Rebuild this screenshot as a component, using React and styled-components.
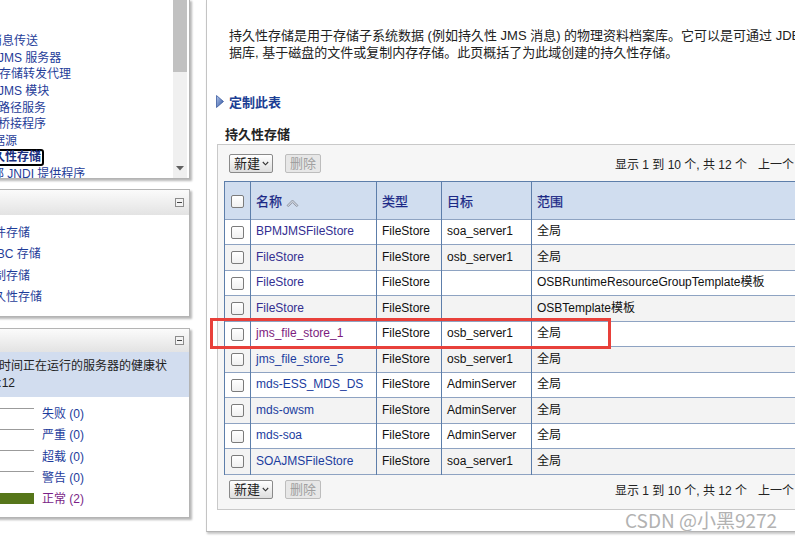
import React from "react";
import styled, { createGlobalStyle } from "styled-components";

const GlobalStyle = createGlobalStyle`
  html, body { margin: 0; padding: 0; background: #fff; }
  body {
    font-family: "Liberation Sans", "Noto Sans CJK SC", sans-serif;
    font-size: 12px;
    color: #222;
    overflow: hidden;
  }
`;

const Page = styled.div`
  position: relative;
  display: flex;
  width: 795px;
  height: 540px;
  overflow: hidden;
  background: #fff;
`;

/* ---------- left column ---------- */
const LeftColumn = styled.div`
  flex: none;
  width: 194px;
  display: flex;
  flex-direction: column;
  overflow: hidden;
`;

const Panel = styled.section`
  flex: none;
  box-sizing: border-box;
  width: 250px;
  height: ${(p) => p.$h}px;
  margin-left: -60px;
  margin-top: ${(p) => p.$gap}px;
  background: #fff;
  border: 1px solid #b4b4b4;
  box-shadow: 2px 2px 2px rgba(0, 0, 0, 0.28);
  display: flex;
  flex-direction: ${(p) => (p.$row ? "row" : "column")};
`;

const TreeList = styled.div`
  flex: 1;
  padding-top: 33px;
  overflow: hidden;
`;

const TreeItem = styled.div`
  height: 16.6px;
  display: flex;
  align-items: center;
  padding-left: ${(p) => p.$x + 59}px;
  white-space: nowrap;
  font-size: 12px;
  line-height: 14px;
  color: #1f3d99;
`;

const Selected = styled.span`
  display: inline-block;
  margin-left: -3px;
  padding: 0 1px;
  border: 2px solid #000;
  border-radius: 3px;
  line-height: 13px;
  font-weight: bold;
  color: #1a2f80;
`;

const Scrollbar = styled.div`
  flex: none;
  width: 14px;
  margin-right: 2px;
  background: #f0f0f0;
  display: flex;
  flex-direction: column;
  justify-content: space-between;
  align-items: center;
`;

const Thumb = styled.div`
  width: 14px;
  height: 72px;
  background: #c1c1c1;
`;

const ArrowDown = styled.svg`
  margin-bottom: 7px;
`;

const PanelHeader = styled.div`
  flex: none;
  height: ${(p) => p.$h}px;
  background: linear-gradient(#fbfbfb, #e3e3e3);
  display: flex;
  justify-content: flex-end;
  align-items: center;
  padding-right: 5px;
`;

const CollapseBox = styled.span`
  box-sizing: border-box;
  width: 9px;
  height: 9px;
  border: 1px solid #8c8c8c;
  background: #f3f3f3;
  display: flex;
  align-items: center;
  justify-content: center;
  &::after {
    content: "";
    width: 5px;
    height: 1px;
    background: #444;
  }
`;

const LinkList = styled.div`
  padding: 7.5px 0 0 ${(p) => p.$x + 59}px;
`;

const LinkItem = styled.div`
  height: 21.6px;
  line-height: 21.6px;
  font-size: 12px;
  white-space: nowrap;
  color: #1f3d99;
`;

const InfoBox = styled.div`
  flex: none;
  height: 45px;
  box-sizing: border-box;
  padding-top: 5.5px;
  background: #d2ddef;
`;

const InfoLine = styled.div`
  display: flex;
  justify-content: flex-end;
  width: ${(p) => p.$end + 59}px;
  height: 17px;
  line-height: 17px;
  font-size: 12px;
  white-space: nowrap;
  color: #222;
`;

const HealthList = styled.div`
  padding: 7px 0 0 40px;
`;

const HealthRow = styled.div`
  display: flex;
  align-items: flex-start;
  height: 21.3px;
`;

const Bar = styled.div`
  flex: none;
  box-sizing: border-box;
  width: 53px;
  height: 11px;
  margin-top: 3.5px;
  border-top: 1px solid #9b9b9b;
  background: ${(p) => (p.$filled ? "#56761a" : "transparent")};
  ${(p) => (p.$filled ? "border-top-color: #56761a;" : "")}
`;

const HealthLabel = styled.span`
  margin-left: 8px;
  line-height: 21.3px;
  font-size: 12px;
  color: ${(p) => (p.$visited ? "#7a1f87" : "#1d3c9c")};
`;

/* ---------- main ---------- */
const Main = styled.main`
  flex: none;
  box-sizing: border-box;
  width: 640px;
  height: 532px;
  margin-left: 12px;
  padding-left: 10px;
  border-left: 1px solid #c4c4c4;
  border-bottom: 1px solid #b3b3b3;
  box-shadow: 1px 2px 2px rgba(0, 0, 0, 0.22);
  display: flex;
  flex-direction: column;
  align-items: flex-start;
`;

const Description = styled.div`
  margin-top: 26.5px;
  padding-left: 12px;
  font-size: 13px;
  line-height: 17px;
  color: #222;
  white-space: nowrap;
`;

const CustomizeRow = styled.div`
  margin-top: 32px;
  margin-left: -1px;
  height: 17px;
  display: flex;
  align-items: center;
  gap: 5px;
  font-size: 13px;
  font-weight: bold;
  color: #1c3f94;
`;

const SectionTitle = styled.h2`
  margin: 16px 0 0;
  padding-left: 8px;
  font-size: 13px;
  line-height: 17px;
  font-weight: bold;
  color: #222;
`;

const TableBox = styled.div`
  margin-top: 1.5px;
  box-sizing: border-box;
  width: 700px;
  border: 1px solid #c9c9c9;
  background: #f6f6f6;
  padding: 9px 0 10px 6px;
`;

const Toolbar = styled.div`
  display: grid;
  grid-template-columns: 386px auto;
  align-items: center;
  padding-left: 5px;
  height: 19px;
  margin-top: ${(p) => p.$mt || 0}px;
`;

const ButtonGroup = styled.div`
  display: flex;
  gap: 12px;
`;

const Button = styled.button`
  box-sizing: border-box;
  height: 19px;
  padding: ${(p) => (p.$menu ? "0 3px 0 4px" : "0 4px")};
  display: flex;
  align-items: center;
  gap: 2px;
  font-family: inherit;
  font-size: 13px;
  line-height: 15px;
  border-radius: 2px;
  border: 1px solid ${(p) => (p.disabled ? "#bdbdbd" : "#8a8a8a")};
  background: ${(p) => (p.disabled ? "#e7e7e7" : "linear-gradient(#ffffff, #dedede)")};
  color: ${(p) => (p.disabled ? "#a0a0a0" : "#222")};
`;

const Pager = styled.div`
  font-size: 12px;
  white-space: nowrap;
  color: #222;
  display: flex;
  gap: 11px;
`;

const Table = styled.table`
  margin-top: 7.5px;
  border-collapse: collapse;
  border: 1px solid #5d7eaa;
  table-layout: fixed;
  width: 647px;
`;

const Row = styled.tr`
  height: ${(p) => (p.$head ? 38 : 25.5)}px;
  background: ${(p) => (p.$head ? "#d0ddef" : p.$alt ? "#f3f3f3" : "#fff")};
  border-bottom: 1px solid #8ea3c2;
`;

const HeadCell = styled.th`
  box-sizing: border-box;
  width: ${(p) => p.$w}px;
  padding: 0 0 0 ${(p) => (p.$center ? 0 : 5)}px;
  text-align: ${(p) => (p.$center ? "center" : "left")};
  font-weight: normal;
  font-size: 13px;
  color: #1b2886;
  -webkit-text-stroke: 0.25px #1b2886;
  border-left: 1px solid #5d7eaa;
  white-space: nowrap;
`;

const Cell = styled.td`
  box-sizing: border-box;
  padding: 0 0 0 ${(p) => (p.$center ? 0 : 5)}px;
  text-align: ${(p) => (p.$center ? "center" : "left")};
  font-size: 12px;
  line-height: 15px;
  color: #111;
  border-left: 1px solid #5d7eaa;
  white-space: nowrap;
  overflow: hidden;
`;

const NameLink = styled.span`
  color: ${(p) =>
    p.$tone === "visited" ? "#332f91" : p.$tone === "purple" ? "#7c1c7e" : "#1b3c9e"};
`;

const Checkbox = styled.span`
  display: inline-block;
  box-sizing: border-box;
  width: 13px;
  height: 13px;
  vertical-align: middle;
  border: 1px solid #7b7b7b;
  border-radius: 2px;
  background: linear-gradient(#ffffff, #f0f0f0);
`;

const SortIcon = styled.svg`
  margin-left: 4px;
  vertical-align: middle;
`;

const Highlight = styled.div`
  position: absolute;
  left: 210px;
  top: 318px;
  width: 401px;
  height: 31px;
  box-sizing: border-box;
  border: 3px solid #e8403a;
  pointer-events: none;
`;

const Watermark = styled.div`
  position: absolute;
  left: 625px;
  top: 509px;
  font-family: "Noto Sans CJK SC", sans-serif;
  font-size: 19px;
  line-height: 22px;
  color: #b2b2b2;
  text-shadow: 0 0 1px #fff;
  white-space: nowrap;
`;

const treeItems = [
  { t: "消息传送", x: -10 },
  { t: "JMS 服务器", x: -2 },
  { t: "存储转发代理", x: -1 },
  { t: "JMS 模块", x: -2 },
  { t: "路径服务", x: -2 },
  { t: "桥接程序", x: -2 },
  { t: "数据源", x: -19 },
  { t: "持久性存储", x: -19, sel: true },
  { t: "外部 JNDI 提供程序", x: -20 },
];

const storeLinks = ["文件存储", "JDBC 存储", "复制存储", "持久性存储"];

const health = [
  { label: "失败 (0)" },
  { label: "严重 (0)" },
  { label: "超载 (0)" },
  { label: "警告 (0)" },
  { label: "正常 (2)", filled: true, visited: true },
];

const rows = [
  { name: "BPMJMSFileStore", tone: "visited", target: "soa_server1", scope: "全局" },
  { name: "FileStore", tone: "visited", target: "osb_server1", scope: "全局" },
  { name: "FileStore", tone: "visited", target: "", scope: "OSBRuntimeResourceGroupTemplate模板" },
  { name: "FileStore", tone: "visited", target: "", scope: "OSBTemplate模板" },
  { name: "jms_file_store_1", tone: "purple", target: "osb_server1", scope: "全局" },
  { name: "jms_file_store_5", tone: "blue", target: "osb_server1", scope: "全局" },
  { name: "mds-ESS_MDS_DS", tone: "blue", target: "AdminServer", scope: "全局" },
  { name: "mds-owsm", tone: "blue", target: "AdminServer", scope: "全局" },
  { name: "mds-soa", tone: "blue", target: "AdminServer", scope: "全局" },
  { name: "SOAJMSFileStore", tone: "blue", target: "soa_server1", scope: "全局" },
];

const Chevron = () => (
  <svg width="7" height="5" viewBox="0 0 7 5">
    <path d="M0.8 1 L3.5 3.8 L6.2 1" fill="none" stroke="#333" strokeWidth="1.1" />
  </svg>
);

const TableToolbar = ({ mt }) => (
  <Toolbar $mt={mt}>
    <ButtonGroup>
      <Button $menu>
        新建
        <Chevron />
      </Button>
      <Button disabled>删除</Button>
    </ButtonGroup>
    <Pager>
      <span>显示 1 到 10 个, 共 12 个</span>
      <span>上一个 | 下一个</span>
    </Pager>
  </Toolbar>
);

export default function App() {
  return (
    <>
      <GlobalStyle />
      <Page>
        <LeftColumn>
          <Panel $gap={-1} $h={180} $row>
            <TreeList>
              {treeItems.map((it) => (
                <TreeItem key={it.t} $x={it.x}>
                  {it.sel ? <Selected>{it.t}</Selected> : it.t}
                </TreeItem>
              ))}
            </TreeList>
            <Scrollbar>
              <Thumb />
              <ArrowDown width="8" height="5" viewBox="0 0 8 5">
                <path d="M0 0 H8 L4 4.5 Z" fill="#606060" />
              </ArrowDown>
            </Scrollbar>
          </Panel>

          <Panel $gap={10} $h={128}>
            <PanelHeader $h={25}>
              <CollapseBox />
            </PanelHeader>
            <LinkList $x={-18}>
              {storeLinks.map((s) => (
                <LinkItem key={s}>{s}</LinkItem>
              ))}
            </LinkList>
          </Panel>

          <Panel $gap={11} $h={190}>
            <PanelHeader $h={23}>
              <CollapseBox />
            </PanelHeader>
            <InfoBox>
              <InfoLine $end={167}>
                <span>显示截至上次刷新时间正在运行的服务器的健康状</span>
              </InfoLine>
              <InfoLine $end={15}>
                <span>况 (上次刷新: 下午3:46:12</span>
              </InfoLine>
            </InfoBox>
            <HealthList>
              {health.map((h) => (
                <HealthRow key={h.label}>
                  <Bar $filled={h.filled} />
                  <HealthLabel $visited={h.visited}>{h.label}</HealthLabel>
                </HealthRow>
              ))}
            </HealthList>
          </Panel>
        </LeftColumn>

        <Main>
          <Description>
            <div>
              持久性存储是用于存储子系统数据 (例如持久性 JMS 消息) 的物理资料档案库。它可以是可通过 JDBC 访问的数
            </div>
            <div>据库, 基于磁盘的文件或复制内存存储。此页概括了为此域创建的持久性存储。</div>
          </Description>

          <CustomizeRow>
            <svg width="8" height="13" viewBox="0 0 8 13">
              <defs>
                <linearGradient id="tri" x1="0" y1="0" x2="1" y2="1">
                  <stop offset="0" stopColor="#b4c8ec" />
                  <stop offset="1" stopColor="#2b4f9e" />
                </linearGradient>
              </defs>
              <path d="M0.5 0.5 L7.5 6.5 L0.5 12.5 Z" fill="url(#tri)" stroke="#3a5a9e" strokeWidth="0.8" />
            </svg>
            <span>定制此表</span>
          </CustomizeRow>

          <SectionTitle>持久性存储</SectionTitle>

          <TableBox>
            <TableToolbar />
            <Table>
              <thead>
                <Row $head>
                  <HeadCell $w={26} $center>
                    <Checkbox />
                  </HeadCell>
                  <HeadCell $w={126}>
                    名称
                    <SortIcon width="13" height="9" viewBox="0 0 13 9">
                      <path
                        d="M1 7.5 L6.5 2 L12 7.5 L10.5 8.5 L6.5 4.6 L2.5 8.5 Z"
                        fill="#c9cfd9"
                        stroke="#8c93a0"
                        strokeWidth="0.9"
                      />
                    </SortIcon>
                  </HeadCell>
                  <HeadCell $w={65}>类型</HeadCell>
                  <HeadCell $w={90}>目标</HeadCell>
                  <HeadCell $w={340}>范围</HeadCell>
                </Row>
              </thead>
              <tbody>
                {rows.map((r, i) => (
                  <Row key={i} $alt={i % 2 === 1}>
                    <Cell $center>
                      <Checkbox />
                    </Cell>
                    <Cell>
                      <NameLink $tone={r.tone}>{r.name}</NameLink>
                    </Cell>
                    <Cell>FileStore</Cell>
                    <Cell>{r.target}</Cell>
                    <Cell>{r.scope}</Cell>
                  </Row>
                ))}
              </tbody>
            </Table>
            <TableToolbar mt={5} />
          </TableBox>
        </Main>

        <Highlight />
        <Watermark>CSDN @小黑9272</Watermark>
      </Page>
    </>
  );
}
